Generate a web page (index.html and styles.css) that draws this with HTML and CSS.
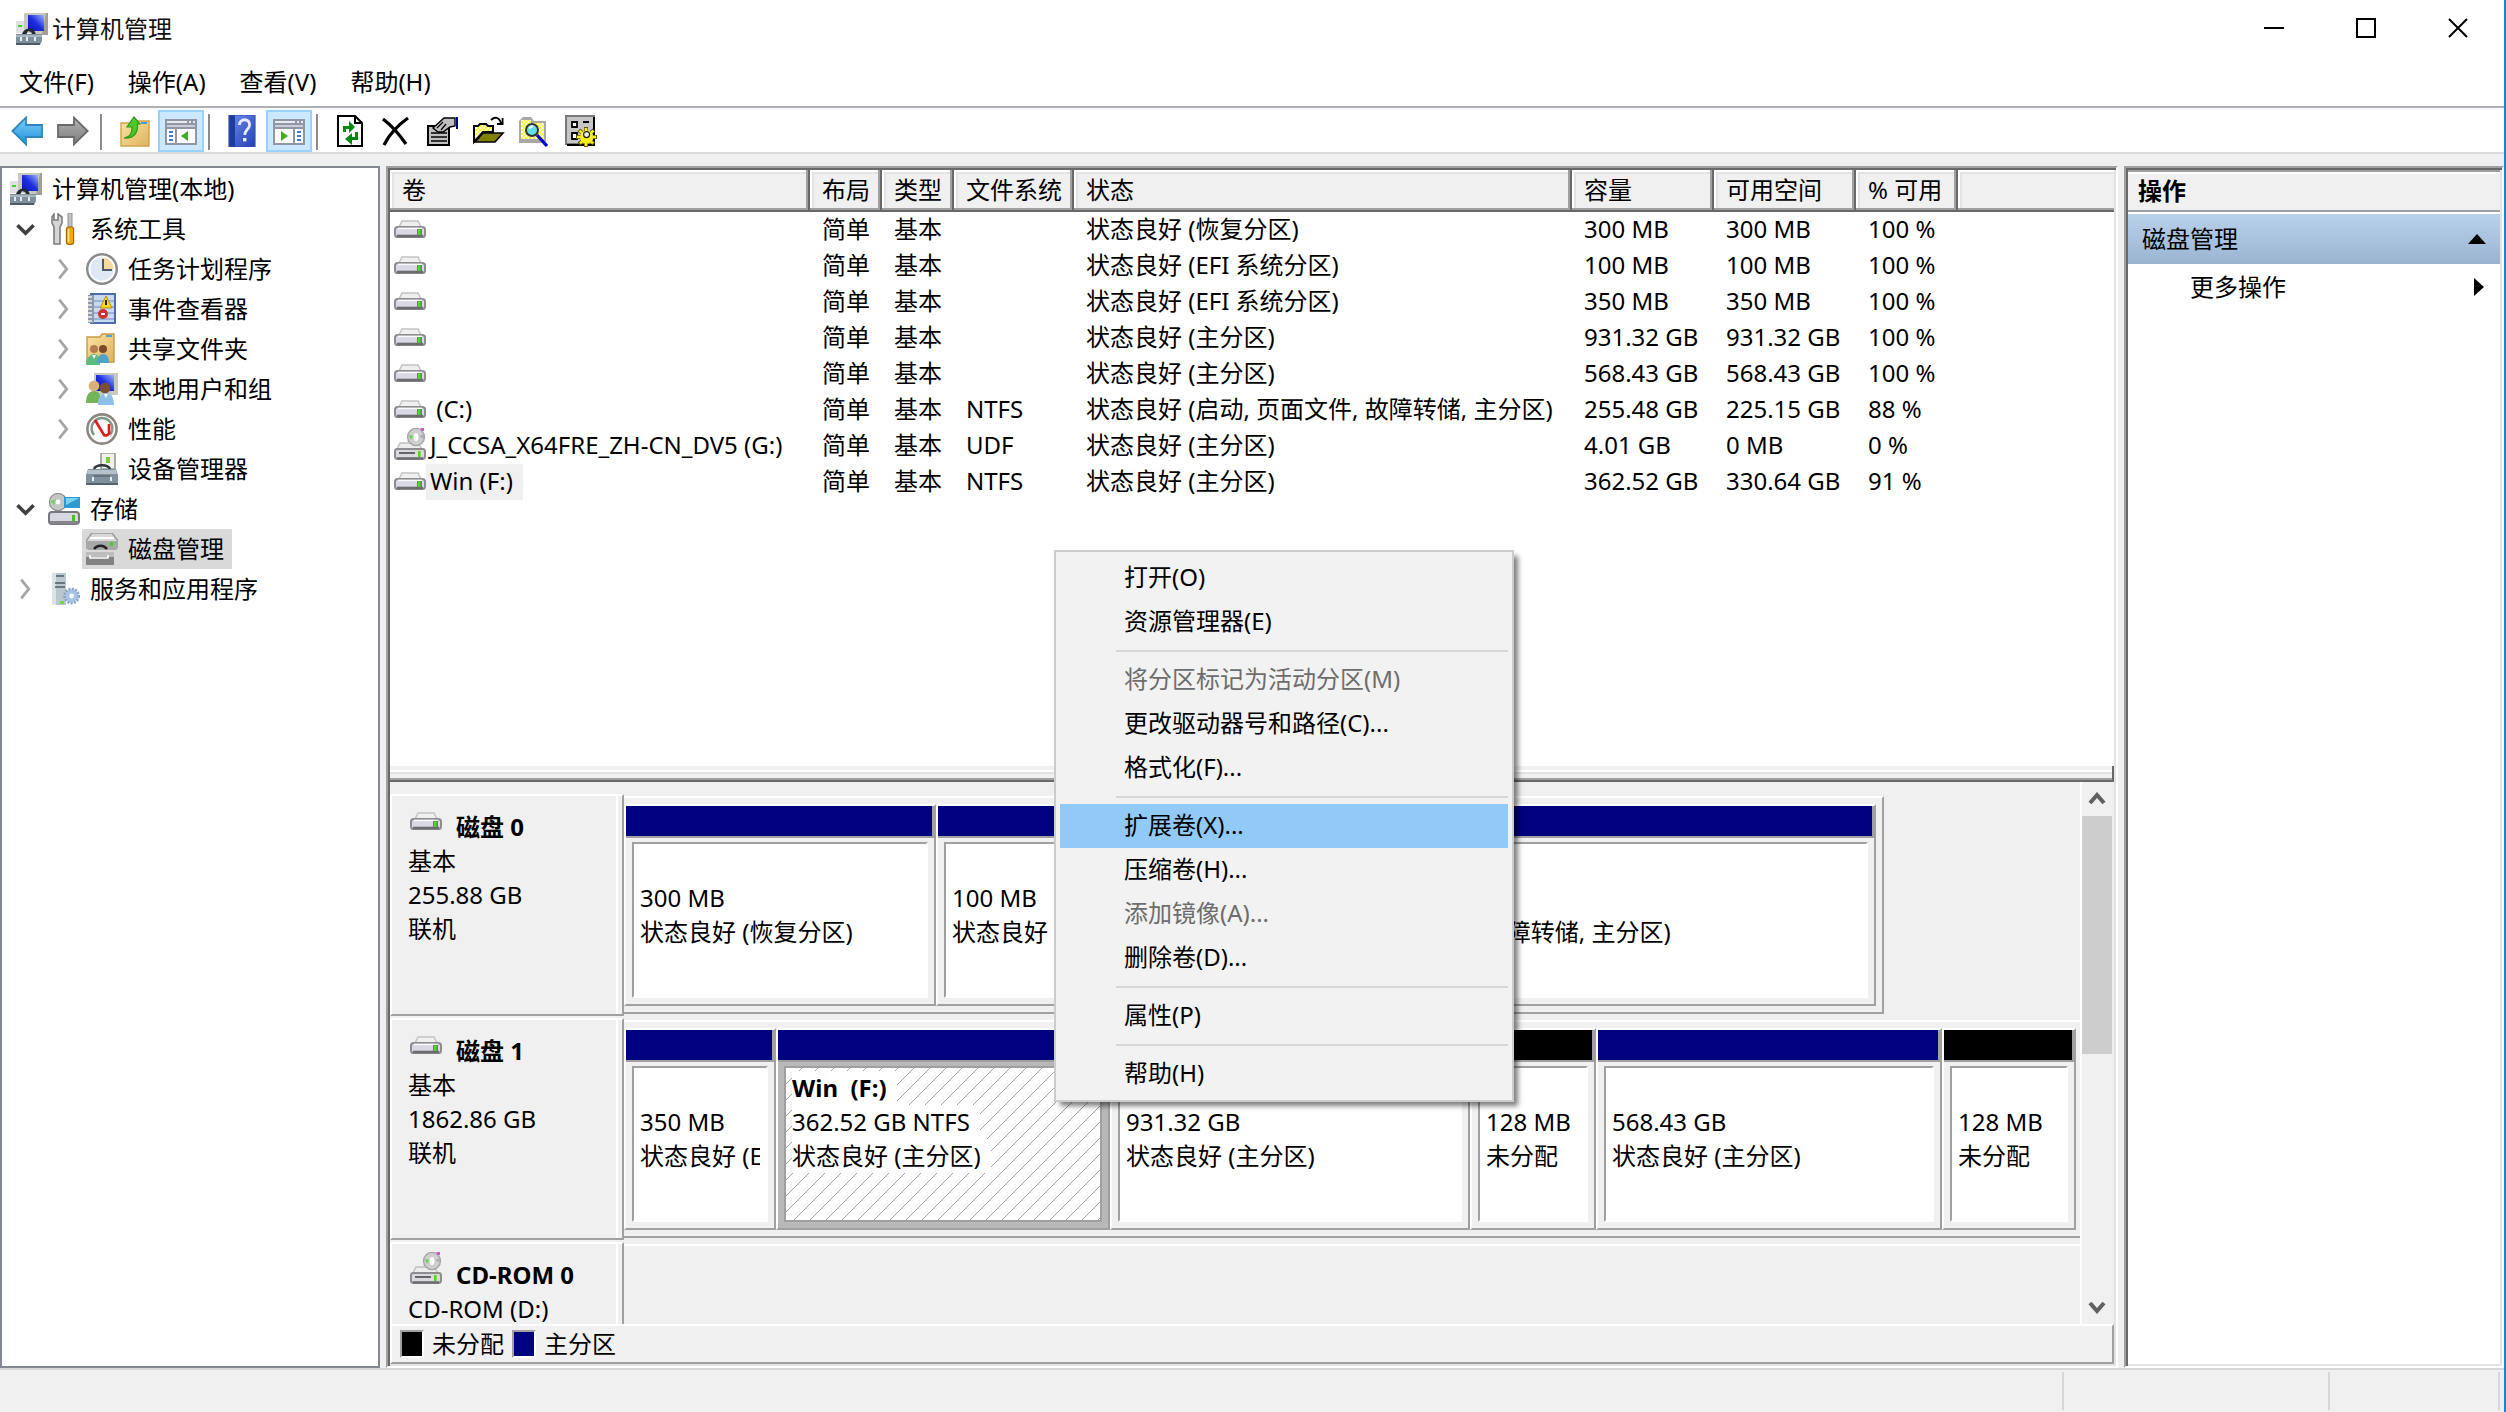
FILE: index.html
```html
<!DOCTYPE html>
<html lang="zh-CN">
<head>
<meta charset="utf-8">
<title>计算机管理</title>
<link rel="stylesheet" href="styles.css">
</head>
<body>
<svg class="sprite" aria-hidden="true">
  <defs>
    <linearGradient id="g-screen" x1="0" y1="1" x2="1" y2="0"><stop offset="0" stop-color="#0a14b4"/><stop offset=".5" stop-color="#1c2ee0"/><stop offset="1" stop-color="#9db4ff"/></linearGradient>
    <linearGradient id="g-folder" x1="0" y1="0" x2="1" y2="1"><stop offset="0" stop-color="#fbe3a4"/><stop offset="1" stop-color="#deb35c"/></linearGradient>
    <linearGradient id="g-blue" x1="0" y1="0" x2="0" y2="1"><stop offset="0" stop-color="#7fd2f8"/><stop offset="1" stop-color="#1d8fdc"/></linearGradient>
    <linearGradient id="g-grey" x1="0" y1="0" x2="0" y2="1"><stop offset="0" stop-color="#b4b4b4"/><stop offset="1" stop-color="#7c7c7c"/></linearGradient>
    <linearGradient id="g-help" x1="0" y1="0" x2="1" y2="1"><stop offset="0" stop-color="#6c8cf0"/><stop offset="1" stop-color="#2340b4"/></linearGradient>
    <pattern id="p-dots" width="2" height="2" patternUnits="userSpaceOnUse"><rect width="2" height="2" fill="#fff"/><rect width="1" height="1" fill="#ff0"/><rect x="1" y="1" width="1" height="1" fill="#ff0"/></pattern>
  </defs>
  <symbol id="i-computer" viewBox="0 0 16 16">
    <path d="M4 0h12v11H9L4 9z" fill="#c9c7c0"/><path d="M15 0h1v11h-3z" fill="#a09e98"/><path d="M6 1h8v8H6z" fill="url(#g-screen)"/>
    <path d="M0 4h4v6H0z" fill="#d4d4d4" opacity=".7"/><path d="M1 6h2v1H1z" fill="#35d82c"/>
    <path d="M3 10.500c1-3 5-4 6.500-1l.5 1.500H8.500L7.500 9.500 6 9l-1 2H3z" fill="#222a35"/>
    <path d="M0 10.500h13V14l-1 2H0z" fill="#7f909c"/><path d="M0 11h13v1H0z" fill="#a9b7c0"/><path d="M2 12h1v2H2zM5 12h1v2H5zM9 12h1v2H9z" fill="#e4eaee"/><path d="M0 15h12v1H0z" fill="#4d5a64"/>
  </symbol>
  <symbol id="i-tools" viewBox="0 0 16 16">
    <path d="M3 .5v3h2v-3l2 1.500v3L6 7v8.500H3V7L2 5V2z" fill="#d6d6d6" stroke="#7d7d7d" stroke-width=".8"/>
    <path d="M10 0h2v7h-2z" fill="#c4c4c4" stroke="#8e8e8e" stroke-width=".5"/><rect x="9.200" y="7" width="3.600" height="8.700" rx="1.200" fill="#f0a712" stroke="#a86b05" stroke-width=".6"/><path d="M10.300 8v6.500" stroke="#ffe08a" stroke-width=".8"/>
  </symbol>
  <symbol id="i-clock" viewBox="0 0 16 16">
    <circle cx="8" cy="8" r="7.400" fill="#dfe9f5" stroke="#8a8a8a" stroke-width="1.200"/><path d="M8 8V1.800A6.200 6.200 0 0 1 14.200 8z" fill="#f7d9a0"/><circle cx="8" cy="8" r="6.200" fill="none" stroke="#fff" stroke-width=".8"/><path d="M8.500 3v5.500H13" fill="none" stroke="#4a5b70" stroke-width="1"/>
  </symbol>
  <symbol id="i-event" viewBox="0 0 16 16">
    <rect x="2.500" y=".5" width="12" height="14.500" fill="#c8daf2" stroke="#4f6ca8"/><path d="M4 4h10M4 7h10M4 10h10M4 13h10" stroke="#8aa5d0" stroke-width=".8"/><path d="M1 1h3v14H1z" fill="#8d98aa"/><path d="M1 2h2M1 4h2M1 6h2M1 8h2M1 10h2M1 12h2M1 14h2" stroke="#eee" stroke-width=".8"/>
    <path d="M10 1.500l3 6H7z" fill="#ffd52a" stroke="#b98f00" stroke-width=".5"/><path d="M10 3.500v2.500" stroke="#222"/><circle cx="8.500" cy="10.500" r="2.500" fill="#d22f2f"/><path d="M7.500 10.500h2" stroke="#fff"/>
  </symbol>
  <symbol id="i-shared" viewBox="0 0 16 16">
    <path d="M.5 2H7l1-1.500h6V14.500H.5z" fill="url(#g-folder)" stroke="#c99a45" stroke-width=".7"/><path d="M10 1h3v1h-3z" fill="#4aa3e8"/>
    <circle cx="4" cy="8" r="2" fill="#b57b4f"/><circle cx="8.500" cy="8" r="2" fill="#7b4a2c"/><path d="M0 16c0-3.500 2-5.500 4-5.500S7 12.500 7 16z" fill="#5fba7d"/><path d="M5.500 15c0-3 1.500-4.500 3.200-4.500S11.500 12 11.500 15z" fill="#4fa3c8"/><path d="M3 11l1 2 1-2z" fill="#fff"/>
  </symbol>
  <symbol id="i-users" viewBox="0 0 16 16">
    <path d="M4 0h12v11H4z" fill="#c9c7c0"/><path d="M5 1h9v8H5z" fill="url(#g-screen)"/><circle cx="4" cy="6.500" r="2.700" fill="#d8b27a"/><path d="M0 15c0-4 1.500-6 4-6s3.500 2 3.500 6z" fill="#74b458"/><circle cx="9.500" cy="7.500" r="2.700" fill="#7a5034"/><path d="M6 16c0-4 1.500-6 4-6s4 2 4 6z" fill="#8fc0ea"/><path d="M9 10.500l1 2 1-2z" fill="#fff"/>
  </symbol>
  <symbol id="i-perf" viewBox="0 0 16 16">
    <circle cx="8" cy="8" r="7.300" fill="#fbfbfb" stroke="#8d8780" stroke-width="1.300"/><path d="M4 11a5.200 5.200 0 1 1 8 0" fill="none" stroke="#7d9a8a" stroke-width="1.200"/><path d="M4.500 3.500L9 11c1.500.8 3-.5 2.500-2V5.500" fill="none" stroke="#e01818" stroke-width="1.300"/>
  </symbol>
  <symbol id="i-device" viewBox="0 0 16 16">
    <path d="M7.500 0h7v8h-7z" fill="#f1f1ec" stroke="#9a9a94" stroke-width=".8"/><path d="M10 2h2v3h-2z" fill="#7ecb3c"/><path d="M4 8c1-2.500 7-2.500 8 0" fill="none" stroke="#2c343b" stroke-width="1.200"/><path d="M1 8h14l1 3v5H0v-5z" fill="#81919c"/><path d="M1 8.500h14l.6 2H.4z" fill="#b5c2ca"/><path d="M3.500 11v3M12.500 11v3" stroke="#e6edf1"/><path d="M0 15h16v1H0z" fill="#55626c"/><path d="M3 11.500h10" stroke="#5a6771" stroke-width=".7"/>
  </symbol>
  <symbol id="i-storage" viewBox="0 0 16 16">
    <circle cx="5" cy="4.500" r="4.300" fill="#c4c8c4" stroke="#8d8d8d" stroke-width=".6"/><path d="M1 4l3-1-1 3z" fill="#7bd26a"/><circle cx="5" cy="4.500" r="1.200" fill="#fff"/><path d="M8 2h8v5.500H8z" fill="#2e9bd0"/><path d="M9 2.500h6.500L9 6z" fill="#7fd0ee"/>
    <rect x=".5" y="9.500" width="15" height="6" rx="1.500" fill="#d6d6e0" stroke="#77777d"/><path d="M1 14h14v1.500H1z" fill="#85858b"/><path d="M12 11h1.500v3H12z" fill="#43c41e"/>
  </symbol>
  <symbol id="i-diskmgmt" viewBox="0 0 16 16">
    <path d="M3 0h10l3 4v3H0V4z" fill="#d8d8d8" stroke="#9a9a9a" stroke-width=".7"/><path d="M0 4h16v3.500l-1 1H1l-1-1z" fill="#a8a8a8"/><path d="M2 2.500h12" stroke="#fff"/><path d="M12 4.500h1.500v2H12z" fill="#43d01e"/><path d="M4 8c1.500-2.200 5-2.200 6.500 0" fill="none" stroke="#222" stroke-width="1.200"/><path d="M0 10h14v6H0z" fill="#828282"/><path d="M0 9.500h14v2.500H0z" fill="#bdbdbd"/><path d="M2 11v1.500h9V11" fill="none" stroke="#fff" stroke-width=".8"/>
  </symbol>
  <symbol id="i-services" viewBox="0 0 16 16">
    <path d="M2 0h7v16H2z" fill="#b9c8cc"/><path d="M2 0h2v16H2z" fill="#dae4e6"/><path d="M4 1.500h4M3.500 5h5M3.500 7h5" stroke="#4e5d63" stroke-width=".8"/><path d="M6 14h2v1.500H6z" fill="#6fdc3c"/><circle cx="11.800" cy="11.500" r="3.400" fill="#b9d0ea" stroke="#86a6cc" stroke-width="1.600" stroke-dasharray="1 .6"/><circle cx="11.800" cy="11.500" r="2.900" fill="#a9c4e4"/><circle cx="11.800" cy="11.500" r="1.200" fill="#f4f8fc"/>
  </symbol>
  <symbol id="i-hdd" viewBox="0 0 16 16">
    <path d="M4 4.500h8l1.500 3h-11z" fill="#f0f0f0" stroke="#c4c4c4" stroke-width=".8"/><rect x=".5" y="7.500" width="15" height="5" rx="1.300" fill="#d9d9e6" stroke="#8d8d91"/><path d="M2 8.200h12" stroke="#fafafa" stroke-width=".8"/><path d="M1.500 12h13" stroke="#6c6c70" stroke-width="1.300"/><path d="M11.500 8.500h2.500v3h-2.500z" fill="#6d7d68"/><path d="M12 8.500h1.200v3H12z" fill="#4edb1c"/>
  </symbol>
  <symbol id="i-cd" viewBox="0 0 16 16">
    <path d="M3 7.500h9l2 3H1.500z" fill="#ededed" stroke="#c0c0c0" stroke-width=".7"/><ellipse cx="11" cy="4.500" rx="4.200" ry="4.300" fill="#cfcfcf" stroke="#a4a4a4" stroke-width=".7"/><path d="M7.500 3.500l2 .5-1 2z" fill="#4edb3c"/><path d="M13 0h2v1.500h-1z" fill="#d64fe0"/><ellipse cx="11" cy="4.500" rx="1.200" ry="2" fill="#fff"/><path d="M12.500 4l2.300-.6v2z" fill="#b9a0c0"/>
    <rect x=".5" y="10.500" width="15" height="5" rx="1.200" fill="#d9d9df" stroke="#8d8d91"/><path d="M1.500 15.200h13" stroke="#6c6c70" stroke-width="1.200"/><path d="M2.500 12.500h8" stroke="#666"/><path d="M12 11.500h1.300v3H12z" fill="#4edb1c"/>
  </symbol>
  <symbol id="i-back" viewBox="0 0 16 16"><path d="M.7 8L7.500 1.300V5H15.500v6H7.500v3.700z" fill="url(#g-blue)" stroke="#2f86bd" stroke-width=".9"/></symbol>
  <symbol id="i-forward" viewBox="0 0 16 16"><path d="M15.300 8L8.500 1.300V5H.5v6h8v3.700z" fill="url(#g-grey)" stroke="#6a6a6a" stroke-width=".9"/></symbol>
  <symbol id="i-up" viewBox="0 0 16 16">
    <path d="M1 4h7l1-1h6v12.500H1z" fill="url(#g-folder)" stroke="#d1a24c" stroke-width=".7"/><path d="M11 3.500h3v1h-3z" fill="#3f9fe6"/><path d="M2.500 11.500c3-.2 4.200-2.500 4-5.500H4L7.500 1 10.500 4.500h-1.300C9.800 9 7 12 2.500 11.500z" fill="#4cc72a" stroke="#2f9a18" stroke-width=".6"/>
  </symbol>
  <symbol id="i-pane-left" viewBox="0 0 16 16">
    <path d="M0 2h16v13H0z" fill="#8f97a5"/><path d="M1 3h10v1H1zM12 3h1v1h-1zM14 3h1v1h-1z" fill="#e8ebf0"/><path d="M1 5h14v1H1z" fill="#c9ced8"/><path d="M1 7h4v7H1zM6 7h9v7H6z" fill="#fcfcfc"/><path d="M2 8h2v1H2zM2 10h2v1H2zM2 12h2v1H2z" fill="#3c7cc4"/><path d="M11.500 8v5L8 10.500z" fill="#3fae22"/>
  </symbol>
  <symbol id="i-pane-right" viewBox="0 0 16 16">
    <path d="M0 2h16v13H0z" fill="#8f97a5"/><path d="M1 3h10v1H1zM12 3h1v1h-1zM14 3h1v1h-1z" fill="#e8ebf0"/><path d="M1 5h14v1H1z" fill="#c9ced8"/><path d="M1 7h9v7H1zM11 7h4v7h-4z" fill="#fcfcfc"/><path d="M12 8h2v1h-2zM12 10h2v1h-2zM12 12h2v1h-2z" fill="#3c7cc4"/><path d="M4 8v5l3.500-2.500z" fill="#3fae22"/>
  </symbol>
  <symbol id="i-help" viewBox="0 0 16 16">
    <path d="M1 0h13v16H1z" fill="url(#g-help)"/><path d="M1 0h3v16H1z" fill="#1f3c9c"/><path d="M1 0h13v16H1z" fill="none" stroke="#3450b0" stroke-width=".6"/><path d="M6.200 5c0-3.600 5.300-3.400 5.100 0-.2 2.300-2.400 2.400-2.400 5" fill="none" stroke="#e8ecfa" stroke-width="1.400"/><path d="M8 11.500h1.700v1.700H8z" fill="#e8ecfa"/>
  </symbol>
  <symbol id="i-refresh" viewBox="0 0 16 16">
    <path d="M1.500.5H10L13.500 4v11.500h-12z" fill="#fff" stroke="#000"/><path d="M10 .5V4h3.500" fill="none" stroke="#000"/><path d="M4 8.500V5.500h3V3l3 3-3 3V7H5.500v1.500zM11.500 8.500v4h-3v2.500L5 12l3.500-3v2H10V8.500z" fill="#008a10"/>
  </symbol>
  <symbol id="i-delete" viewBox="0 0 16 16"><path d="M1 2c4 3 8 7.500 11.500 12.500M13.500 1.500C8.500 5 4 10 1.500 15" fill="none" stroke="#000" stroke-width="1.600"/></symbol>
  <symbol id="i-props" viewBox="0 0 16 16">
    <path d="M.5 5.500h10.500v9.500H.5z" fill="#c0c0c0" stroke="#000"/><path d="M2 9h8M2 11h8M2 13h8" stroke="#000" stroke-width=".8"/><path d="M3 6.500L8.500 1.500H14v4l-2.500.5L8 8.500H5.500z" fill="#c0c0c0" stroke="#000" stroke-width=".7"/><path d="M5 6.500l3-3M7 7.500l2.500-3" stroke="#000" stroke-width=".6"/><path d="M15 1v6" stroke="#000090"/>
  </symbol>
  <symbol id="i-open" viewBox="0 0 16 16">
    <path d="M.5 13.500V5.500h2l1-1h3l1 1h2.500v3h-5z" fill="url(#p-dots)" stroke="#000"/><path d="M1 13.500l4-4.500h10l-4 4.500z" fill="#808000" stroke="#000" stroke-width=".8"/><path d="M9 2.500c2-1.800 4-1.500 5 1.500M14.800 1.500V4.500H12" fill="none" stroke="#000" stroke-width=".9"/>
  </symbol>
  <symbol id="i-find" viewBox="0 0 16 16">
    <path d="M0 3l2-2h4l1.500 2H13.500v11H0z" fill="#a8a8a8"/><path d="M1 2.500h5v1.500h6.500v8H1z" fill="url(#p-dots)"/><circle cx="6.500" cy="7.500" r="3" fill="#5fe0e8" stroke="#333"/><path d="M5 6.500l2-1" stroke="#fff"/><path d="M9 10l5 5.500" stroke="#0000d0" stroke-width="1.600"/>
  </symbol>
  <symbol id="i-settings" viewBox="0 0 16 16">
    <path d="M.5.500h14v14H.5z" fill="#c6c6c6" stroke="#7a7a7a"/><path d="M14.500 1v14H1" fill="none" stroke="#000"/><path d="M3.500 3.500H6V6H3.500zM3.500 9H6v3H3.500z" fill="#fff" stroke="#000" stroke-width=".9"/><path d="M9 3.500h3" stroke="#000"/>
    <path d="M10.500 6v10M5.500 11h10.500M7 7.500l7.500 7M14.500 7.500l-7.500 7" stroke="#5c5600" stroke-width="2"/><path d="M10.500 6.500v9M6 11h9.500M7.300 7.800l6.700 6.400M14.200 7.800l-6.700 6.400" stroke="#f6ee20" stroke-width="1.300"/><circle cx="10.800" cy="11" r="3.300" fill="#f6ee20"/><circle cx="10.800" cy="9.800" r="1.500" fill="#eee" stroke="#222" stroke-width=".6"/>
  </symbol>
  <symbol id="i-right" viewBox="0 0 16 16"><path d="M6 3l4 5-4 5" fill="none" stroke="#a6a6a6" stroke-width="1.500"/></symbol>
  <symbol id="i-down" viewBox="0 0 16 16"><path d="M4 6l4.300 4.300L12.600 6" fill="none" stroke="#404040" stroke-width="1.900"/></symbol>
</svg>

<header class="titlebar">
  <svg class="icon"><use href="#i-computer"/></svg>
  <h1 class="titlebar-text">计算机管理</h1>
  <div class="window-controls">
    <button type="button" aria-label="最小化"><svg viewBox="0 0 20 20"><path d="M0 10h20"/></svg></button>
    <button type="button" aria-label="最大化"><svg viewBox="0 0 20 20"><path d="M1 1h18v18H1z"/></svg></button>
    <button type="button" aria-label="关闭"><svg viewBox="0 0 20 20"><path d="M1 1l18 18M19 1L1 19"/></svg></button>
  </div>
</header>

<nav class="menubar">
  <button type="button">文件(F)</button>
  <button type="button">操作(A)</button>
  <button type="button">查看(V)</button>
  <button type="button">帮助(H)</button>
</nav>

<div class="toolbar" role="toolbar">
  <button type="button" aria-label="后退"><svg class="icon"><use href="#i-back"/></svg></button>
  <button type="button" aria-label="前进"><svg class="icon"><use href="#i-forward"/></svg></button>
  <span class="toolbar-sep"></span>
  <button type="button" aria-label="上移一级"><svg class="icon"><use href="#i-up"/></svg></button>
  <button type="button" class="is-on" aria-label="控制台树" aria-pressed="true"><svg class="icon"><use href="#i-pane-left"/></svg></button>
  <span class="toolbar-sep"></span>
  <button type="button" aria-label="帮助"><svg class="icon"><use href="#i-help"/></svg></button>
  <button type="button" class="is-on" aria-label="操作窗格" aria-pressed="true"><svg class="icon"><use href="#i-pane-right"/></svg></button>
  <span class="toolbar-sep"></span>
  <button type="button" aria-label="刷新"><svg class="icon"><use href="#i-refresh"/></svg></button>
  <button type="button" aria-label="删除"><svg class="icon"><use href="#i-delete"/></svg></button>
  <button type="button" aria-label="属性"><svg class="icon"><use href="#i-props"/></svg></button>
  <button type="button" aria-label="打开"><svg class="icon"><use href="#i-open"/></svg></button>
  <button type="button" aria-label="查找"><svg class="icon"><use href="#i-find"/></svg></button>
  <button type="button" aria-label="设置"><svg class="icon"><use href="#i-settings"/></svg></button>
</div>

<main class="workspace">
  <nav class="tree-pane">
    <ul class="tree">
      <li>
        <div class="tree-row"><span class="node"><svg class="icon"><use href="#i-computer"/></svg>计算机管理(本地)</span></div>
        <ul>
          <li>
            <div class="tree-row"><svg class="twisty"><use href="#i-down"/></svg><span class="node"><svg class="icon"><use href="#i-tools"/></svg>系统工具</span></div>
            <ul class="tree-sub">
              <li class="tree-row"><svg class="twisty"><use href="#i-right"/></svg><span class="node"><svg class="icon"><use href="#i-clock"/></svg>任务计划程序</span></li>
              <li class="tree-row"><svg class="twisty"><use href="#i-right"/></svg><span class="node"><svg class="icon"><use href="#i-event"/></svg>事件查看器</span></li>
              <li class="tree-row"><svg class="twisty"><use href="#i-right"/></svg><span class="node"><svg class="icon"><use href="#i-shared"/></svg>共享文件夹</span></li>
              <li class="tree-row"><svg class="twisty"><use href="#i-right"/></svg><span class="node"><svg class="icon"><use href="#i-users"/></svg>本地用户和组</span></li>
              <li class="tree-row"><svg class="twisty"><use href="#i-right"/></svg><span class="node"><svg class="icon"><use href="#i-perf"/></svg>性能</span></li>
              <li class="tree-row"><svg class="twisty"></svg><span class="node"><svg class="icon"><use href="#i-device"/></svg>设备管理器</span></li>
            </ul>
          </li>
          <li>
            <div class="tree-row"><svg class="twisty"><use href="#i-down"/></svg><span class="node"><svg class="icon"><use href="#i-storage"/></svg>存储</span></div>
            <ul class="tree-sub">
              <li class="tree-row"><svg class="twisty"></svg><span class="node is-selected"><svg class="icon"><use href="#i-diskmgmt"/></svg>磁盘管理</span></li>
            </ul>
          </li>
          <li class="tree-row"><svg class="twisty"><use href="#i-right"/></svg><span class="node"><svg class="icon"><use href="#i-services"/></svg>服务和应用程序</span></li>
        </ul>
      </li>
    </ul>
  </nav>

  <section class="disk-pane">
    <div class="volumes">
      <table class="volume-table">
        <colgroup><col class="c-volume"><col class="c-short"><col class="c-short"><col class="c-fs"><col class="c-status"><col class="c-size"><col class="c-size"><col class="c-percent"><col></colgroup>
        <thead>
          <tr><th>卷</th><th>布局</th><th>类型</th><th>文件系统</th><th>状态</th><th>容量</th><th>可用空间</th><th>% 可用</th><th></th></tr>
        </thead>
        <tbody>
          <tr><td><span class="volume"><svg class="icon"><use href="#i-hdd"/></svg></span></td><td>简单</td><td>基本</td><td></td><td>状态良好 (恢复分区)</td><td>300 MB</td><td>300 MB</td><td>100 %</td><td></td></tr>
          <tr><td><span class="volume"><svg class="icon"><use href="#i-hdd"/></svg></span></td><td>简单</td><td>基本</td><td></td><td>状态良好 (EFI 系统分区)</td><td>100 MB</td><td>100 MB</td><td>100 %</td><td></td></tr>
          <tr><td><span class="volume"><svg class="icon"><use href="#i-hdd"/></svg></span></td><td>简单</td><td>基本</td><td></td><td>状态良好 (EFI 系统分区)</td><td>350 MB</td><td>350 MB</td><td>100 %</td><td></td></tr>
          <tr><td><span class="volume"><svg class="icon"><use href="#i-hdd"/></svg></span></td><td>简单</td><td>基本</td><td></td><td>状态良好 (主分区)</td><td>931.32 GB</td><td>931.32 GB</td><td>100 %</td><td></td></tr>
          <tr><td><span class="volume"><svg class="icon"><use href="#i-hdd"/></svg></span></td><td>简单</td><td>基本</td><td></td><td>状态良好 (主分区)</td><td>568.43 GB</td><td>568.43 GB</td><td>100 %</td><td></td></tr>
          <tr><td><span class="volume"><svg class="icon"><use href="#i-hdd"/></svg><span class="volume-name">&nbsp;(C:)</span></span></td><td>简单</td><td>基本</td><td>NTFS</td><td>状态良好 (启动, 页面文件, 故障转储, 主分区)</td><td>255.48 GB</td><td>225.15 GB</td><td>88 %</td><td></td></tr>
          <tr><td><span class="volume"><svg class="icon"><use href="#i-cd"/></svg><span class="volume-name">J_CCSA_X64FRE_ZH-CN_DV5 (G:)</span></span></td><td>简单</td><td>基本</td><td>UDF</td><td>状态良好 (主分区)</td><td>4.01 GB</td><td>0 MB</td><td>0 %</td><td></td></tr>
          <tr><td><span class="volume"><svg class="icon"><use href="#i-hdd"/></svg><span class="volume-name is-selected">Win (F:)</span></span></td><td>简单</td><td>基本</td><td>NTFS</td><td>状态良好 (主分区)</td><td>362.52 GB</td><td>330.64 GB</td><td>91 %</td><td></td></tr>
        </tbody>
      </table>
    </div>

    <div class="splitter"></div>

    <div class="disks">
      <div class="disk-list">
        <article class="disk">
          <div class="disk-label"><div class="disk-info">
            <h2><svg class="icon"><use href="#i-hdd"/></svg><span>磁盘 0</span></h2>
            <p>基本</p><p>255.88 GB</p><p>联机</p>
          </div></div>
          <div class="track"><div class="frame" style="width:86.54%">
            <div class="part" style="flex-grow:308"><div class="bar"></div><div class="part-body"><div class="part-box"><p></p><p>300 MB</p><p>状态良好 (恢复分区)</p></div></div></div>
            <div class="part" style="flex-grow:248"><div class="bar"></div><div class="part-body"><div class="part-box"><p></p><p>100 MB</p><p>状态良好 (EFI 系统分区)</p></div></div></div>
            <div class="part" style="flex-grow:684"><div class="bar"></div><div class="part-body"><div class="part-box"><p class="part-name">(C:)</p><p>255.48 GB NTFS</p><p>状态良好 (启动, 页面文件, 故障转储, 主分区)</p></div></div></div>
          </div></div>
        </article>
        <article class="disk">
          <div class="disk-label"><div class="disk-info">
            <h2><svg class="icon"><use href="#i-hdd"/></svg><span>磁盘 1</span></h2>
            <p>基本</p><p>1862.86 GB</p><p>联机</p>
          </div></div>
          <div class="track"><div class="frame is-full">
            <div class="part" style="flex-grow:148"><div class="bar"></div><div class="part-body"><div class="part-box"><p></p><p>350 MB</p><p>状态良好 (EFI 系统分区)</p></div></div></div>
            <div class="part is-selected" style="flex-grow:330"><div class="bar"></div><div class="part-body"><div class="part-box"><p class="part-name"><span>Win&nbsp; (F:)</span></p><p><span>362.52 GB NTFS</span></p><p><span>状态良好 (主分区)</span></p></div></div></div>
            <div class="part" style="flex-grow:356"><div class="bar"></div><div class="part-body"><div class="part-box"><p></p><p>931.32 GB</p><p>状态良好 (主分区)</p></div></div></div>
            <div class="part is-free" style="flex-grow:122"><div class="bar"></div><div class="part-body"><div class="part-box"><p></p><p>128 MB</p><p>未分配</p></div></div></div>
            <div class="part" style="flex-grow:342"><div class="bar"></div><div class="part-body"><div class="part-box"><p></p><p>568.43 GB</p><p>状态良好 (主分区)</p></div></div></div>
            <div class="part is-free" style="flex-grow:130"><div class="bar"></div><div class="part-body"><div class="part-box"><p></p><p>128 MB</p><p>未分配</p></div></div></div>
          </div></div>
        </article>
        <article class="disk">
          <div class="disk-label"><div class="disk-info">
            <h2><svg class="icon"><use href="#i-cd"/></svg><span>CD-ROM 0</span></h2>
            <p>CD-ROM (D:)</p>
          </div></div>
          <div class="track"><div class="frame is-full"></div></div>
        </article>
      </div>
      <div class="scrollbar">
        <button type="button" aria-label="向上滚动"><svg viewBox="0 0 18 14"><path d="M2 11l7-8 7 8"/></svg></button>
        <div class="thumb"></div>
        <button type="button" aria-label="向下滚动"><svg viewBox="0 0 18 14"><path d="M2 3l7 8 7-8"/></svg></button>
      </div>
    </div>

    <div class="legend">
      <span class="swatch is-free"></span><span>未分配</span>
      <span class="swatch"></span><span>主分区</span>
    </div>
  </section>

  <aside class="action-pane">
    <h2 class="action-title">操作</h2>
    <button type="button" class="action-group"><span>磁盘管理</span><svg viewBox="0 0 18 10"><path d="M9 0l9 10H0z"/></svg></button>
    <button type="button" class="action-item"><span>更多操作</span><svg viewBox="0 0 10 18"><path d="M0 0l10 9-10 9z"/></svg></button>
  </aside>
</main>

<footer class="statusbar"><span></span><span></span></footer>

<div class="context-menu" role="menu">
  <button type="button" role="menuitem">打开(O)</button>
  <button type="button" role="menuitem">资源管理器(E)</button>
  <hr>
  <button type="button" role="menuitem" disabled>将分区标记为活动分区(M)</button>
  <button type="button" role="menuitem">更改驱动器号和路径(C)...</button>
  <button type="button" role="menuitem">格式化(F)...</button>
  <hr>
  <button type="button" role="menuitem" class="is-active">扩展卷(X)...</button>
  <button type="button" role="menuitem">压缩卷(H)...</button>
  <button type="button" role="menuitem" disabled>添加镜像(A)...</button>
  <button type="button" role="menuitem">删除卷(D)...</button>
  <hr>
  <button type="button" role="menuitem">属性(P)</button>
  <hr>
  <button type="button" role="menuitem">帮助(H)</button>
</div>
</body>
</html>
```
FILE: styles.css
```css
:root {
  --face: #f0f0f0;
  --shadow: #a0a0a0;
  --dark: #696969;
  --light: #e3e3e3;
  --navy: #000080;
}

* { box-sizing: border-box; margin: 0; padding: 0; }

body {
  position: relative;
  display: flex;
  flex-direction: column;
  height: 100vh;
  overflow: hidden;
  background: #fff;
  border-right: 2px solid #1883d7;
  color: #000;
  font: 24px/36px "Noto Sans", "Noto Sans CJK SC", sans-serif;
}

button {
  border: 0;
  background: none;
  color: inherit;
  font: inherit;
}

ul { list-style: none; }

.sprite { position: absolute; width: 0; height: 0; }
.icon { flex: none; width: 32px; height: 32px; }

/* Title bar */
.titlebar { display: flex; align-items: center; flex: none; height: 58px; padding-left: 16px; }
.titlebar-text { flex: 1; padding-left: 4px; font-size: 24px; font-weight: 400; color: #111; }
.window-controls { display: flex; align-self: flex-start; }
.window-controls button { display: grid; place-items: center; width: 92px; height: 56px; }
.window-controls svg { width: 20px; height: 20px; fill: none; stroke: #000; stroke-width: 2; }

/* Menu bar */
.menubar { display: flex; flex: none; height: 48px; padding-left: 2px; }
.menubar button { padding: 0 17px; }

/* Toolbar */
.toolbar {
  display: flex;
  flex: none;
  padding-left: 4px;
  border-top: 2px solid #b0b0b2;
  border-bottom: 2px solid #dadada;
  box-shadow: inset 0 2px #f5f8fc;
  padding-top: 2px;
}
.toolbar button { display: grid; place-items: center; width: 46px; height: 42px; }
.toolbar .is-on { background: #cce8ff; border: 2px solid #99d1ff; }
.toolbar-sep { width: 2px; margin: 4px 10px 2px 4px; background: #8c8c8c; }

/* Workspace */
.workspace {
  display: flex;
  flex: 1;
  gap: 6px;
  min-height: 0;
  padding-top: 12px;
  background: var(--face);
}

.tree-pane { flex: none; width: 380px; padding: 1px 0 0 8px; background: #fff; border: 2px solid #828790; }
.tree-row { display: flex; height: 40px; }
.tree-sub { padding-left: 38px; }
.twisty { flex: none; align-self: center; width: 30px; height: 30px; margin-right: 4px; }
.node { display: flex; align-items: center; gap: 10px; padding: 0 8px 0 4px; white-space: nowrap; }
.tree > li > .tree-row > .node { padding-left: 0; }
.node.is-selected { background: #d9d9d9; }

.disk-pane,
.action-pane {
  display: flex;
  flex-direction: column;
  border: 2px solid #fff;
  border-top-color: var(--shadow);
  border-left-color: var(--shadow);
}
.disk-pane {
  flex: 1;
  min-width: 0;
  padding: 2px;
  box-shadow: inset 2px 2px var(--dark), inset -2px -2px var(--light);
}

/* Volume table */
.volumes { flex: 596 1 0; min-height: 0; overflow: hidden; background: #fff; }
.volume-table { width: 100%; border-collapse: separate; border-spacing: 0; table-layout: fixed; }
.c-volume { width: 420px; }
.c-short { width: 72px; }
.c-fs { width: 120px; }
.c-status { width: 498px; }
.c-size { width: 142px; }
.c-percent { width: 102px; }
.volume-table th {
  height: 42px;
  padding-left: 12px;
  background: var(--face);
  border: solid var(--dark);
  border-width: 0 2px 2px 0;
  box-shadow: inset -2px -2px var(--shadow), inset 2px 2px #fff, inset 4px 4px var(--light);
  font-weight: 400;
  text-align: left;
  white-space: nowrap;
}
.volume-table th:last-child { border-right: 0; box-shadow: inset 0 -2px var(--shadow), inset 2px 2px #fff, inset 4px 4px var(--light); }
.volume-table td { height: 36px; padding-left: 12px; line-height: 34px; vertical-align: top; white-space: nowrap; }
.volume-table td:first-child { padding-left: 4px; }
.volume { display: flex; height: 36px; }
.volume-name { padding: 0 10px 0 4px; }
.volume-name.is-selected { background: var(--face); }

.splitter {
  flex: none;
  height: 16px;
  background: var(--face);
  border-bottom: 2px solid var(--dark);
  border-right: 2px solid var(--dark);
  box-shadow: inset 0 -2px var(--shadow), inset 0 4px var(--face), inset 0 6px #fff, inset 0 8px var(--light);
}

/* Graphical disk view */
.disks { display: flex; flex: 542 1 0; min-height: 0; background: var(--face); }
.disk-list { flex: 1; min-width: 0; padding-top: 12px; overflow: hidden; }
.disk { display: flex; height: 222px; margin-bottom: 2px; }
.disk-label {
  flex: none;
  width: 234px;
  padding-right: 4px;
  border: 2px solid var(--shadow);
  border-top-color: #fff;
  border-left-color: #fff;
}
.disk-info { height: 100%; padding: 8px 0 0 16px; border-right: 2px solid #fff; line-height: 34px; }
.disk-info h2 { display: flex; align-items: flex-end; gap: 14px; height: 40px; padding-left: 2px; font-size: 24px; font-weight: 700; white-space: nowrap; }
.disk-info h2 .icon { align-self: flex-start; }
.track { flex: 1; min-width: 0; padding-top: 2px; }
.frame {
  display: flex;
  height: 218px;
  padding: 6px 6px 6px 0;
  border: solid var(--shadow);
  border-width: 2px 2px 2px 0;
  border-top-color: #fff;
}
.frame.is-full { padding-right: 4px; border-right: 0; }
.part {
  display: flex;
  flex: 1 1 0;
  flex-direction: column;
  min-width: 0;
  border: 2px solid var(--shadow);
  border-top-color: #fff;
  border-left-color: #fff;
}
.bar { height: 32px; background: var(--navy); border: solid var(--shadow); border-width: 0 2px 2px 0; }
.is-free .bar { background: #000; }
.part-body { display: flex; flex: 1; min-height: 0; padding: 4px 6px 6px; }
.part-box {
  flex: 1;
  min-width: 0;
  padding: 3px 6px;
  overflow: hidden;
  background: #fff;
  border: 2px solid #fff;
  border-top-color: var(--shadow);
  border-left-color: var(--shadow);
  line-height: 34px;
  white-space: nowrap;
}
.part-box p { height: 34px; overflow: hidden; }
.part-name { font-weight: 700; }
.part.is-selected .part-body { background: #b8b8b8; }
.part.is-selected .part-box {
  border-color: var(--shadow);
  background: #fff linear-gradient(135deg, transparent 47%, #a0a0a0 48%, #a0a0a0 52%, transparent 53%) 0 0 / 16px 16px;
}
.part.is-selected span { display: inline-block; padding-right: 10px; background: #fff; }

.scrollbar { display: flex; flex: none; flex-direction: column; width: 34px; padding-right: 2px; border-left: 2px solid #fff; }
.scrollbar button { display: grid; place-items: center; height: 34px; }
.scrollbar svg { width: 18px; height: 14px; fill: none; stroke: #606060; stroke-width: 4; }
.thumb { height: 238px; margin-bottom: auto; background: #cdcdcd; }

.legend {
  display: flex;
  flex: none;
  align-items: center;
  gap: 8px;
  height: 40px;
  padding-left: 8px;
  background: var(--face);
  border: 2px solid var(--shadow);
  border-top-color: #fff;
  border-left-color: #fff;
}
.swatch { width: 24px; height: 28px; background: var(--navy); border: 2px solid #fff; border-top-color: var(--shadow); border-left-color: var(--shadow); }
.swatch.is-free { background: #000; }

/* Actions */
.action-pane { flex: none; width: 380px; padding: 2px; background: #fff; box-shadow: inset 2px 2px var(--dark), inset -2px -2px var(--light); }
.action-title {
  height: 44px;
  padding-left: 10px;
  background: var(--face);
  border: solid var(--shadow);
  border-width: 2px 0;
  border-bottom-color: #fff;
  box-shadow: inset 0 2px #fff, inset 0 -2px var(--shadow);
  font-size: 24px;
  line-height: 38px;
}
.action-group,
.action-item { display: flex; align-items: center; justify-content: space-between; }
.action-group { height: 50px; padding: 0 14px; background: linear-gradient(#b9d1ea, #9ab4d1); }
.action-item { height: 46px; padding: 0 16px 0 62px; }
.action-group svg { width: 18px; height: 10px; }
.action-item svg { width: 10px; height: 18px; }

/* Status bar */
.statusbar { display: flex; flex: none; justify-content: flex-end; height: 44px; padding: 2px 4px 2px 0; background: var(--face); border-top: 2px solid #d7d7d7; }
.statusbar span { width: 266px; border-left: 2px solid #d7d7d7; }
.statusbar span:last-child { width: 172px; border-right: 2px solid #d7d7d7; }

/* Context menu */
.context-menu {
  position: absolute;
  top: 550px;
  left: 1054px;
  width: 460px;
  padding: 4px;
  background: #f2f2f2;
  border: 2px solid #ccc;
  box-shadow: 5px 5px 5px -1px rgba(0, 0, 0, .5);
}
.context-menu button { display: block; width: 100%; height: 44px; padding: 0 0 2px 64px; text-align: left; }
.context-menu button:disabled { color: #6d6d6d; }
.context-menu .is-active { background: #91c9f7; }
.context-menu hr { height: 2px; margin: 6px 0 6px 56px; border: 0; background: #d7d7d7; }
```
